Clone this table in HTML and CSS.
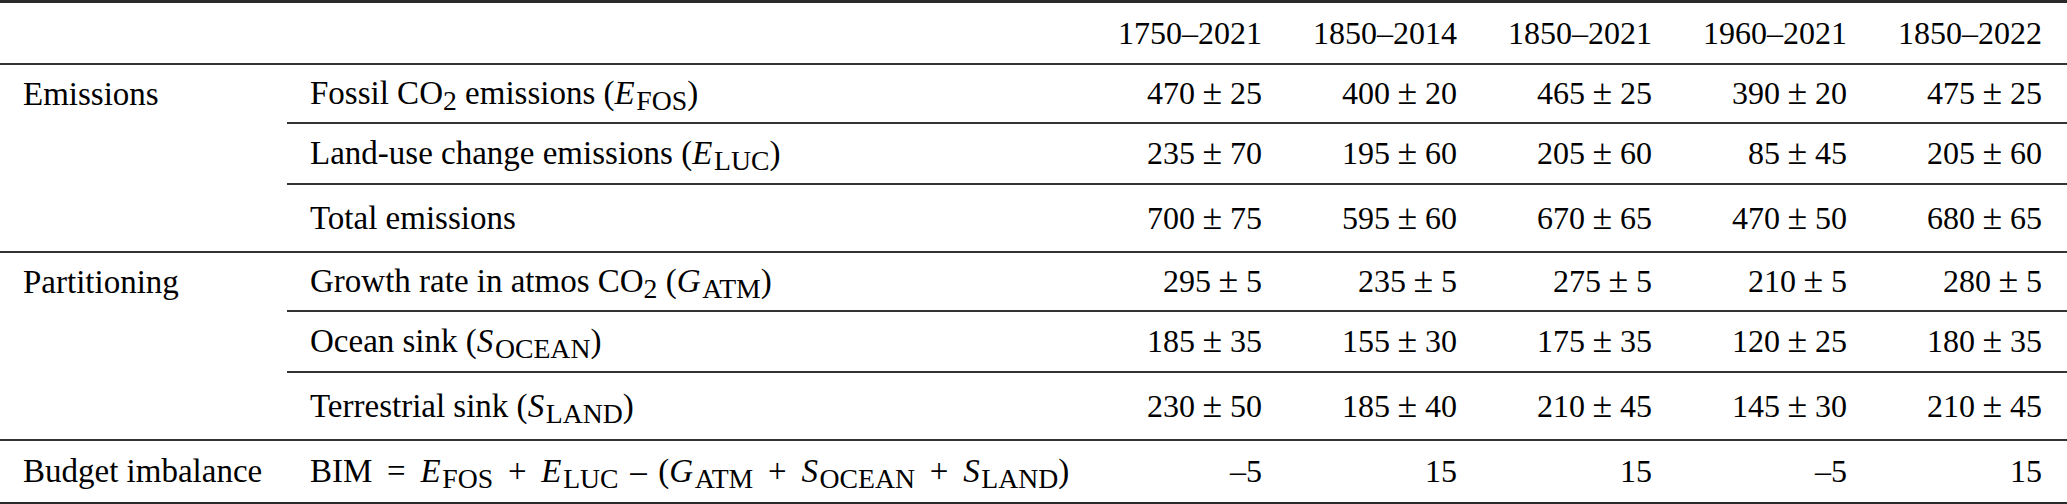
FILE: index.html
```html
<!DOCTYPE html>
<html lang="en">

<head>
    <meta charset="UTF-8">
    <meta name="viewport" content="width=device-width, initial-scale=1.0">
    <title>Cumulative global CO2 budget</title>
    <link rel="stylesheet" href="styles.css">
</head>

<body>
    <table class="budget">
        <colgroup>
            <col class="col_group">
            <col class="col_item">
            <col class="col_val">
            <col class="col_val">
            <col class="col_val">
            <col class="col_val">
            <col class="col_val">
        </colgroup>
        <thead>
            <tr class="head">
                <th></th>
                <th></th>
                <th class="val">1750–2021</th>
                <th class="val">1850–2014</th>
                <th class="val">1850–2021</th>
                <th class="val">1960–2021</th>
                <th class="val">1850–2022</th>
            </tr>
        </thead>
        <tbody>
            <tr class="first">
                <td class="group">Emissions</td>
                <td class="item">Fossil CO<span class="sub">2</span> emissions (<i>E</i><span class="sub">FOS</span>)</td>
                <td class="val">470<span class="pm">±</span>25</td>
                <td class="val">400<span class="pm">±</span>20</td>
                <td class="val">465<span class="pm">±</span>25</td>
                <td class="val">390<span class="pm">±</span>20</td>
                <td class="val">475<span class="pm">±</span>25</td>
            </tr>
            <tr class="mid">
                <td class="group"></td>
                <td class="item">Land-use change emissions (<i>E</i><span class="sub">LUC</span>)</td>
                <td class="val">235<span class="pm">±</span>70</td>
                <td class="val">195<span class="pm">±</span>60</td>
                <td class="val">205<span class="pm">±</span>60</td>
                <td class="val">85<span class="pm">±</span>45</td>
                <td class="val">205<span class="pm">±</span>60</td>
            </tr>
            <tr class="last">
                <td class="group"></td>
                <td class="item">Total emissions</td>
                <td class="val">700<span class="pm">±</span>75</td>
                <td class="val">595<span class="pm">±</span>60</td>
                <td class="val">670<span class="pm">±</span>65</td>
                <td class="val">470<span class="pm">±</span>50</td>
                <td class="val">680<span class="pm">±</span>65</td>
            </tr>
            <tr class="first">
                <td class="group">Partitioning</td>
                <td class="item">Growth rate in atmos CO<span class="sub">2</span> (<i>G</i><span class="sub">ATM</span>)</td>
                <td class="val">295<span class="pm">±</span>5</td>
                <td class="val">235<span class="pm">±</span>5</td>
                <td class="val">275<span class="pm">±</span>5</td>
                <td class="val">210<span class="pm">±</span>5</td>
                <td class="val">280<span class="pm">±</span>5</td>
            </tr>
            <tr class="mid">
                <td class="group"></td>
                <td class="item">Ocean sink (<i>S</i><span class="sub">OCEAN</span>)</td>
                <td class="val">185<span class="pm">±</span>35</td>
                <td class="val">155<span class="pm">±</span>30</td>
                <td class="val">175<span class="pm">±</span>35</td>
                <td class="val">120<span class="pm">±</span>25</td>
                <td class="val">180<span class="pm">±</span>35</td>
            </tr>
            <tr class="last">
                <td class="group"></td>
                <td class="item">Terrestrial sink (<i>S</i><span class="sub">LAND</span>)</td>
                <td class="val">230<span class="pm">±</span>50</td>
                <td class="val">185<span class="pm">±</span>40</td>
                <td class="val">210<span class="pm">±</span>45</td>
                <td class="val">145<span class="pm">±</span>30</td>
                <td class="val">210<span class="pm">±</span>45</td>
            </tr>
            <tr class="end">
                <td class="group">Budget imbalance</td>
                <td class="item">BIM<span class="op">=</span><i>E</i><span class="sub">FOS</span><span class="op">+</span><i>E</i><span class="sub">LUC</span><span class="minus">–</span>(<i>G</i><span class="sub">ATM</span><span class="op">+</span><i>S</i><span class="sub">OCEAN</span><span class="op">+</span><i>S</i><span class="sub">LAND</span>)</td>
                <td class="val">–5</td>
                <td class="val">15</td>
                <td class="val">15</td>
                <td class="val">–5</td>
                <td class="val">15</td>
            </tr>
        </tbody>
    </table>
</body>

</html>
```

FILE: styles.css
```css
* {
    margin: 0;
    padding: 0;
    box-sizing: border-box;
}

body {
    background-color: #fff;
    color: #000;
    font-family: "Liberation Serif", "Times New Roman", serif;
    font-size: 33px;
}

.budget {
    width: 2067px;
    table-layout: fixed;
    border-collapse: separate;
    border-spacing: 0;
    border-top: 3px solid #2a2a2a;
}

.col_group {
    width: 287px;
}

.col_val {
    width: 195px;
}

.budget th,
.budget td {
    font-weight: normal;
    text-align: left;
    vertical-align: middle;
    white-space: nowrap;
    padding: 0 23px;
}

.budget .val {
    font-size: 32px;
    text-align: right;
    padding: 0 25px 0 0;
}

/* row heights follow the rules in the original table */
.head th {
    height: 62px;
    border-bottom: 2px solid #333;
}

.first td {
    height: 59px;
}

.mid td {
    height: 61px;
}

.last td {
    height: 68px;
    border-bottom: 2px solid #333;
}

.end td {
    height: 64px;
    border-bottom: 3px solid #2a2a2a;
}

/* partial rules only under the item and value columns */
.first td:not(.group),
.mid td:not(.group) {
    border-bottom: 2px solid #333;
}

.item i {
    margin-right: 0.05em;
}

.sub {
    font-size: 0.84em;
    vertical-align: -0.2em;
    line-height: 0;
}

.pm {
    display: inline-block;
    font-size: 1.12em;
    line-height: 1;
    width: 0.7em;
    margin: 0 0.14em;
    text-align: center;
}

.op {
    display: inline-block;
    width: 0.78em;
    margin: 0 0.34em;
    text-align: center;
}

.minus {
    margin: 0 0.35em;
}
```
